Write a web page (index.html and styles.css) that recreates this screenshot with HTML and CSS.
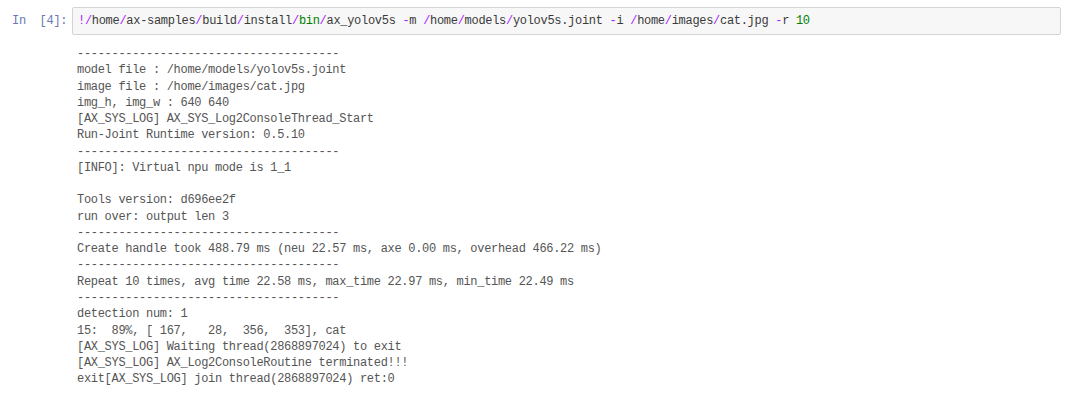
FILE: index.html
```html
<!DOCTYPE html>
<html>
<head>
<meta charset="utf-8">
<link rel="stylesheet" href="styles.css">
</head>
<body>
<div class="cell">
  <div class="row">
    <div class="prompt">In&nbsp;&nbsp;[4]:</div>
    <div class="input-area"><pre class="code"><span class="op">!/</span>home<span class="op">/</span>ax-samples<span class="op">/</span>build<span class="op">/</span>install<span class="op">/</span><span class="num">bin</span><span class="op">/</span>ax_yolov5s <span class="op">-</span>m <span class="op">/</span>home<span class="op">/</span>models<span class="op">/</span>yolov5s.joint <span class="op">-</span>i <span class="op">/</span>home<span class="op">/</span>images<span class="op">/</span>cat.jpg <span class="op">-</span>r <span class="num">10</span></pre></div>
  </div>
  <div class="row out-row">
    <div class="prompt"></div>
    <div class="output"><pre class="out">--------------------------------------
model file : /home/models/yolov5s.joint
image file : /home/images/cat.jpg
img_h, img_w : 640 640
[AX_SYS_LOG] AX_SYS_Log2ConsoleThread_Start
Run-Joint Runtime version: 0.5.10
--------------------------------------
[INFO]: Virtual npu mode is 1_1

Tools version: d696ee2f
run over: output len 3
--------------------------------------
Create handle took 488.79 ms (neu 22.57 ms, axe 0.00 ms, overhead 466.22 ms)
--------------------------------------
Repeat 10 times, avg time 22.58 ms, max_time 22.97 ms, min_time 22.49 ms
--------------------------------------
detection num: 1
15:  89%, [ 167,   28,  356,  353], cat
[AX_SYS_LOG] Waiting thread(2868897024) to exit
[AX_SYS_LOG] AX_Log2ConsoleRoutine terminated!!!
exit[AX_SYS_LOG] join thread(2868897024) ret:0</pre></div>
  </div>
</div>
</body>
</html>
```
FILE: styles.css
```css
html, body {
  margin: 0;
  padding: 0;
  background: #ffffff;
}

.cell {
  padding: 7px 14px 0 12px;
  font-family: "Liberation Mono", "DejaVu Sans Mono", monospace;
  font-size: 12px;
  letter-spacing: -0.3px;
}

.row {
  display: flex;
  align-items: flex-start;
}

.prompt {
  flex: 0 0 60px;
  color: #6a78b4;
  line-height: 28px;
  white-space: pre;
}

.input-area {
  flex: 1;
  background: #f7f7f7;
  border: 1px solid #d4d4d4;
  border-radius: 2px;
  padding: 5px 5px;
}

pre {
  margin: 0;
  font-family: inherit;
  font-size: inherit;
  letter-spacing: inherit;
}

.code {
  line-height: 16px;
  color: #3a3a3a;
}

.op {
  color: #aa22ff;
}

.num {
  color: #008000;
}

.out-row {
  margin-top: 11px;
}

.output {
  flex: 1;
  padding-left: 5px;
}

.out {
  line-height: 16.26px;
  color: #555555;
}
```
